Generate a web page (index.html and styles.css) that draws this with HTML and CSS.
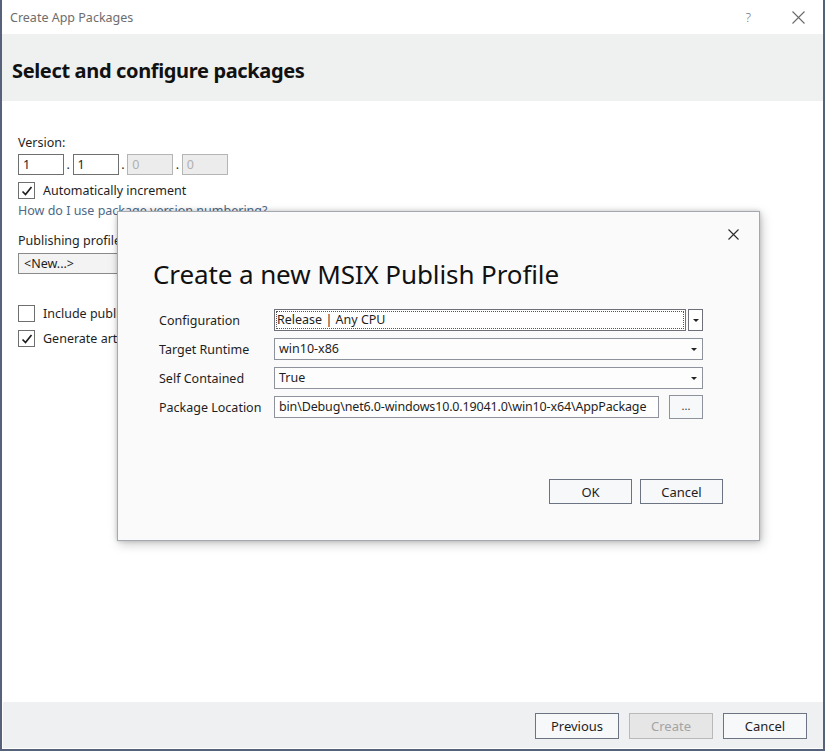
FILE: index.html
```html
<!DOCTYPE html>
<html>
<head>
<meta charset="utf-8">
<link rel="stylesheet" href="styles.css">
</head>
<body>
<div class="window">
  <div class="titlebar">
    <span class="title-text">Create App Packages</span>
    <div class="title-actions">
      <span class="help">?</span>
      <svg class="close" width="13" height="13" viewBox="0 0 13 13"><path d="M0.5 0.5 L12.5 12.5 M12.5 0.5 L0.5 12.5" stroke="#6a6a6a" stroke-width="1.1" fill="none"/></svg>
    </div>
  </div>
  <div class="header"><h1>Select and configure packages</h1></div>
  <div class="content">
    <div class="label">Version:</div>
    <div class="version-row">
      <div class="vbox">1</div><span class="dot">.</span>
      <div class="vbox">1</div><span class="dot">.</span>
      <div class="vbox disabled">0</div><span class="dot">.</span>
      <div class="vbox disabled">0</div>
    </div>
    <div class="check-row first">
      <span class="checkbox"><svg width="14" height="14" viewBox="0 0 14 14"><path d="M2.5 7.5 L5.5 10.5 L11.5 3" stroke="#1e1e1e" stroke-width="1.7" fill="none"/></svg></span>
      <span>Automatically increment</span>
    </div>
    <div class="link">How do I use package version numbering?</div>
    <div class="label profile-label">Publishing profile</div>
    <div class="profile-select">&lt;New...&gt;</div>
    <div class="check-row include clipped">
      <span class="checkbox"></span>
      <span class="clip-text">Include public symbol files</span>
    </div>
    <div class="check-row generate clipped">
      <span class="checkbox"><svg width="14" height="14" viewBox="0 0 14 14"><path d="M2.5 7.5 L5.5 10.5 L11.5 3" stroke="#1e1e1e" stroke-width="1.7" fill="none"/></svg></span>
      <span class="clip-text">Generate artifacts to upload</span>
    </div>
  </div>
  <div class="footer">
    <button class="btn">Previous</button>
    <button class="btn disabled">Create</button>
    <button class="btn">Cancel</button>
  </div>

  <div class="modal">
    <div class="modal-close">
      <svg width="11" height="11" viewBox="0 0 11 11"><path d="M0.5 0.5 L10.5 10.5 M10.5 0.5 L0.5 10.5" stroke="#2a2a2a" stroke-width="1.1" fill="none"/></svg>
    </div>
    <h2>Create a new MSIX Publish Profile</h2>
    <div class="form">
      <div class="row">
        <span class="flabel">Configuration</span>
        <div class="combo">
          <div class="field focus">Release | Any CPU</div>
          <div class="drop"><span class="arrow"></span></div>
        </div>
      </div>
      <div class="row">
        <span class="flabel">Target Runtime</span>
        <div class="select">win10-x86<span class="arrow"></span></div>
      </div>
      <div class="row">
        <span class="flabel">Self Contained</span>
        <div class="select">True<span class="arrow"></span></div>
      </div>
      <div class="row">
        <span class="flabel">Package Location</span>
        <div class="path">bin\Debug\net6.0-windows10.0.19041.0\win10-x64\AppPackage</div>
        <button class="browse">...</button>
      </div>
    </div>
    <div class="modal-buttons">
      <button class="btn">OK</button>
      <button class="btn">Cancel</button>
    </div>
  </div>
</div>
</body>
</html>
```
FILE: styles.css
```css
* { box-sizing: border-box; }
html, body { margin: 0; padding: 0; background: #ffffff; }
body {
  font-family: "Noto Sans", "Open Sans", "DejaVu Sans", sans-serif;
  font-size: 12.5px;
  color: #1e1e1e;
}
.window {
  position: relative;
  width: 825px;
  height: 751px;
  border-left: 2px solid #56627a;
  border-right: 2px solid #56627a;
  border-bottom: 2px solid #56627a;
  display: flex;
  flex-direction: column;
  background: #ffffff;
  overflow: hidden;
}
.titlebar {
  height: 34px;
  flex: none;
  display: flex;
  align-items: center;
  justify-content: space-between;
  padding-left: 8px;
}
.title-text { color: #6d6d6d; font-size: 12.5px; }
.title-actions { display: flex; align-items: center; }
.help { color: #6d6d6d; font-size: 13px; font-weight: 300; margin-right: 41px; }
.close { margin-right: 18px; }
.header {
  height: 67px;
  flex: none;
  background: #eff0f0;
  display: flex;
  align-items: center;
  padding-left: 10px;
}
.header h1 {
  margin: 0;
  font-size: 20px;
  font-weight: 700;
  letter-spacing: -0.35px;
  color: #111;
  padding-top: 6px;
}
.content {
  flex: 1;
  padding: 33px 0 0 16px;
}
.label { line-height: 17px; }
.version-row { display: flex; align-items: center; margin-top: 3px; height: 21px; }
.vbox {
  width: 46px;
  height: 21px;
  border: 1px solid #6f6f6f;
  padding-left: 4px;
  line-height: 19px;
  background: #fff;
}
.vbox.disabled {
  border-color: #b5b5b5;
  background: #ececec;
  color: #b0b0b0;
}
.dot { width: 8.6px; text-align: center; line-height: 21px; }
.check-row { display: flex; align-items: center; height: 17px; gap: 8px; }
.check-row.first { margin-top: 7px; }
.check-row.clipped { width: 99px; overflow: hidden; white-space: nowrap; }
.clip-text { flex: none; }
.checkbox {
  flex: none;
  width: 17px; height: 17px;
  border: 1px solid #6f6f6f;
  background: #fff;
  display: flex; align-items: center; justify-content: center;
}
.link { color: #4e6986; line-height: 17px; margin-top: 3px; }
.profile-label { margin-top: 13px; }
.profile-select {
  margin-top: 4px;
  width: 380px;
  height: 21px;
  border: 1px solid #8a8a8a;
  background: #f3f3f3;
  padding-left: 5px;
  line-height: 19px;
}
.check-row.include { margin-top: 31px; }
.check-row.generate { margin-top: 8px; }

.footer {
  flex: none;
  height: 46px;
  margin: 0 0 1px 1px;
  background: #eef0f1;
  display: flex;
  align-items: center;
  justify-content: flex-end;
  padding: 2px 16px 0 0;
  gap: 10px;
}
.btn {
  font-family: inherit;
  font-size: 13px;
  color: #1e1e1e;
  width: 84px;
  height: 26px;
  border: 1px solid #6c7382;
  background: #f7f8fa;
  padding: 0;
}
.btn.disabled {
  color: #a4a4a4;
  border-color: #b9b9b9;
  background: #e6e6e6;
}

.modal {
  position: absolute;
  left: 115px;
  top: 211px;
  width: 643px;
  height: 330px;
  background: #fafafa;
  border: 1px solid #a4a8b0;
  box-shadow: 0 0 4px rgba(0,0,0,0.18), 2px 3px 10px rgba(0,0,0,0.22);
  padding: 45px 36px 0 35px;
}
.modal-close { position: absolute; right: 20px; top: 15px; }
.modal h2 {
  margin: 0;
  font-weight: 400;
  font-size: 26px;
  line-height: 34px;
  color: #111;
  letter-spacing: -0.1px;
}
.form { margin-top: 18px; padding-left: 6px; display: flex; flex-direction: column; gap: 7px; }
.row { display: flex; align-items: center; height: 22px; }
.flabel { width: 115px; flex: none; }
.combo { display: flex; width: 429px; height: 22px; gap: 2px; }
.field {
  flex: 1;
  border: 1px solid #6d7078;
  background: #fff;
  padding-left: 2px;
  line-height: 20px;
  position: relative;
}
.field.focus { outline: 1px dotted #555; outline-offset: -3px; }
.drop {
  width: 15px;
  border: 1px solid #6d7078;
  background: #fff;
  display: flex; align-items: center; justify-content: center;
}
.arrow {
  width: 0; height: 0;
  border-left: 3px solid transparent;
  border-right: 3px solid transparent;
  border-top: 3px solid #222;
}
.select {
  width: 429px;
  height: 22px;
  border: 1px solid #8d929c;
  background: #fdfdfe;
  padding: 0 5px 0 4px;
  line-height: 20px;
  display: flex; align-items: center; justify-content: space-between;
}
.path {
  width: 385px;
  height: 22px;
  border: 1px solid #8d929c;
  background: #fff;
  padding-left: 4px;
  line-height: 20px;
  white-space: nowrap;
  overflow: hidden;
  letter-spacing: -0.15px;
}
.browse {
  margin-left: 10px;
  width: 34px;
  height: 24px;
  border: 1px solid #8d929c;
  background: #f7f8fa;
  font-family: inherit;
  font-size: 11px;
  padding: 0 0 4px 0;
  color: #333;
}
.modal-buttons {
  margin-top: 61px;
  display: flex;
  justify-content: flex-end;
  gap: 8px;
  padding-right: 0;
}
.modal-buttons .btn { width: 83px; height: 25px; }
```
